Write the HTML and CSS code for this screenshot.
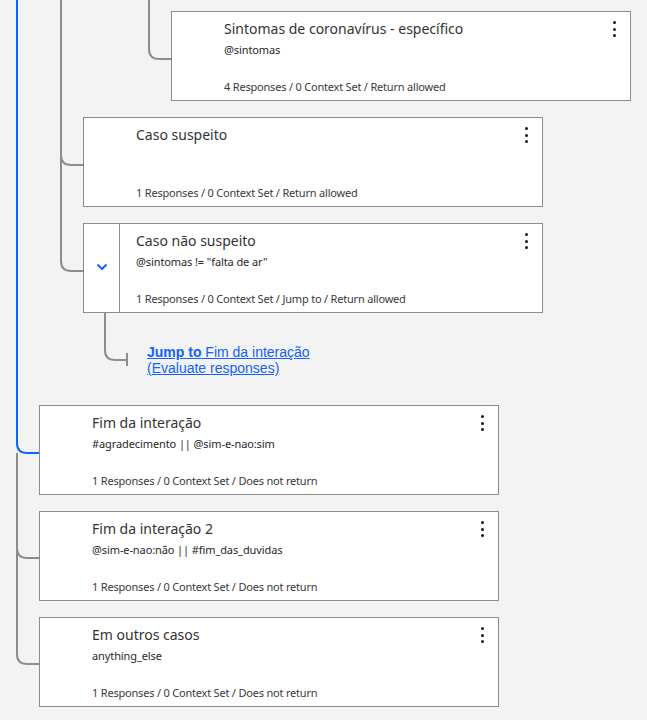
FILE: index.html
```html
<!DOCTYPE html>
<html lang="pt">
<head>
<meta charset="utf-8">
<title>Dialog tree</title>
<link rel="stylesheet" href="styles.css">
</head>
<body>
<main class="canvas">
  <svg class="edges" width="647" height="720" viewBox="0 0 647 720" aria-hidden="true">
    <path class="edge" d="M149 0 V49 Q149 59 159 59 H171"/>
    <path class="edge" d="M61 0 V155 Q61 165 71 165 H83 M61 155 V261 Q61 271 71 271 H83"/>
    <path class="edge" d="M105 313 V350 Q105 360 115 360 H127 M127 353 V366"/>
    <path class="edge" d="M17 453 V548 Q17 558 27 558 H39 M17 548 V654 Q17 664 27 664 H39"/>
    <path class="edge active" d="M17 0 V443 Q17 453 27 453 H39"/>
  </svg>

  <section class="node lvl3">
    <div class="gutter"></div>
    <div class="body">
      <h3 class="title">Sintomas de coronavírus - específico</h3>
      <p class="cond">@sintomas</p>
      <p class="meta">4 Responses / 0 Context Set / Return allowed</p>
    </div>
    <button class="kebab" aria-label="Opções"><i></i><i></i><i></i></button>
  </section>

  <section class="node lvl1">
    <div class="gutter"></div>
    <div class="body">
      <h3 class="title">Caso suspeito</h3>
      <p class="cond"></p>
      <p class="meta">1 Responses / 0 Context Set / Return allowed</p>
    </div>
    <button class="kebab" aria-label="Opções"><i></i><i></i><i></i></button>
  </section>

  <section class="node lvl1">
    <div class="gutter toggle">
      <svg width="12" height="8" viewBox="0 0 12 8"><path d="M1.5 1.5 L6 6 L10.5 1.5" fill="none" stroke="#0f62fe" stroke-width="2"/></svg>
    </div>
    <div class="body">
      <h3 class="title">Caso não suspeito</h3>
      <p class="cond">@sintomas != "falta de ar"</p>
      <p class="meta">1 Responses / 0 Context Set / Jump to / Return allowed</p>
    </div>
    <button class="kebab" aria-label="Opções"><i></i><i></i><i></i></button>
  </section>

  <div class="jump">
    <a href="#fim"><span class="jl"><strong>Jump to</strong> Fim da interação</span><span class="jl">(Evaluate responses)</span></a>
  </div>

  <section class="node lvl0" id="fim">
    <div class="gutter"></div>
    <div class="body">
      <h3 class="title">Fim da interação</h3>
      <p class="cond">#agradecimento || @sim-e-nao:sim</p>
      <p class="meta">1 Responses / 0 Context Set / Does not return</p>
    </div>
    <button class="kebab" aria-label="Opções"><i></i><i></i><i></i></button>
  </section>

  <section class="node lvl0">
    <div class="gutter"></div>
    <div class="body">
      <h3 class="title">Fim da interação 2</h3>
      <p class="cond">@sim-e-nao:não || #fim_das_duvidas</p>
      <p class="meta">1 Responses / 0 Context Set / Does not return</p>
    </div>
    <button class="kebab" aria-label="Opções"><i></i><i></i><i></i></button>
  </section>

  <section class="node lvl0">
    <div class="gutter"></div>
    <div class="body">
      <h3 class="title">Em outros casos</h3>
      <p class="cond">anything_else</p>
      <p class="meta">1 Responses / 0 Context Set / Does not return</p>
    </div>
    <button class="kebab" aria-label="Opções"><i></i><i></i><i></i></button>
  </section>
</main>
</body>
</html>
```

FILE: styles.css
```css
* { box-sizing: border-box; }
html, body { margin: 0; padding: 0; }
body {
  background: #f3f3f3;
  font-family: "Noto Sans", "Open Sans", sans-serif;
  color: #393939;
  width: 647px;
  height: 720px;
  overflow: hidden;
}
.canvas {
  position: relative;
  display: flex;
  flex-direction: column;
  gap: 16px;
  padding-top: 11px;
}
.edges {
  position: absolute;
  left: 0;
  top: 0;
  pointer-events: none;
}
.edge {
  fill: none;
  stroke: #8d8d8d;
  stroke-width: 2;
}
.edge.active { stroke: #0f62fe; }

.node {
  position: relative;
  display: flex;
  width: 460px;
  height: 90px;
  background: #fff;
  border: 1px solid #8d8d8d;
}
.lvl0 { margin-left: 39px; }
.lvl1 { margin-left: 83px; }
.lvl3 { margin-left: 171px; }

.gutter {
  flex: 0 0 36px;
  display: flex;
  align-items: center;
  justify-content: center;
}
.gutter.toggle {
  border-right: 1px solid #8d8d8d;
  padding-bottom: 2px;
}
.body {
  flex: 1;
  display: flex;
  flex-direction: column;
  padding: 7px 0 5px 16px;
}
.title {
  margin: 0;
  font-size: 14px;
  line-height: 20px;
  font-weight: 400;
  color: #333;
}
.cond {
  margin: 3px 0 0;
  font-size: 11px;
  line-height: 16px;
  color: #262626;
  min-height: 16px;
  letter-spacing: -0.1px;
}
.meta {
  margin: auto 0 0;
  font-size: 11px;
  line-height: 16px;
  color: #393939;
  letter-spacing: -0.2px;
}
.kebab {
  position: absolute;
  top: 8px;
  right: 10px;
  width: 12px;
  height: 18px;
  border: 0;
  background: none;
  display: flex;
  flex-direction: column;
  align-items: center;
  justify-content: space-between;
  padding: 1px 0;
}
.kebab i {
  display: block;
  width: 3px;
  height: 3px;
  background: #161616;
  border-radius: 50%;
}

.jump {
  height: 60px;
  padding: 15px 0 0 147px;
  font-family: "Liberation Sans", Arial, sans-serif;
  font-size: 14px;
}
.jump a {
  display: inline-flex;
  flex-direction: column;
  color: #0f62fe;
  text-decoration: underline;
}
.jl { display: block; height: 15.8px; line-height: 15.8px; }
.jump strong { font-weight: 700; }
```
